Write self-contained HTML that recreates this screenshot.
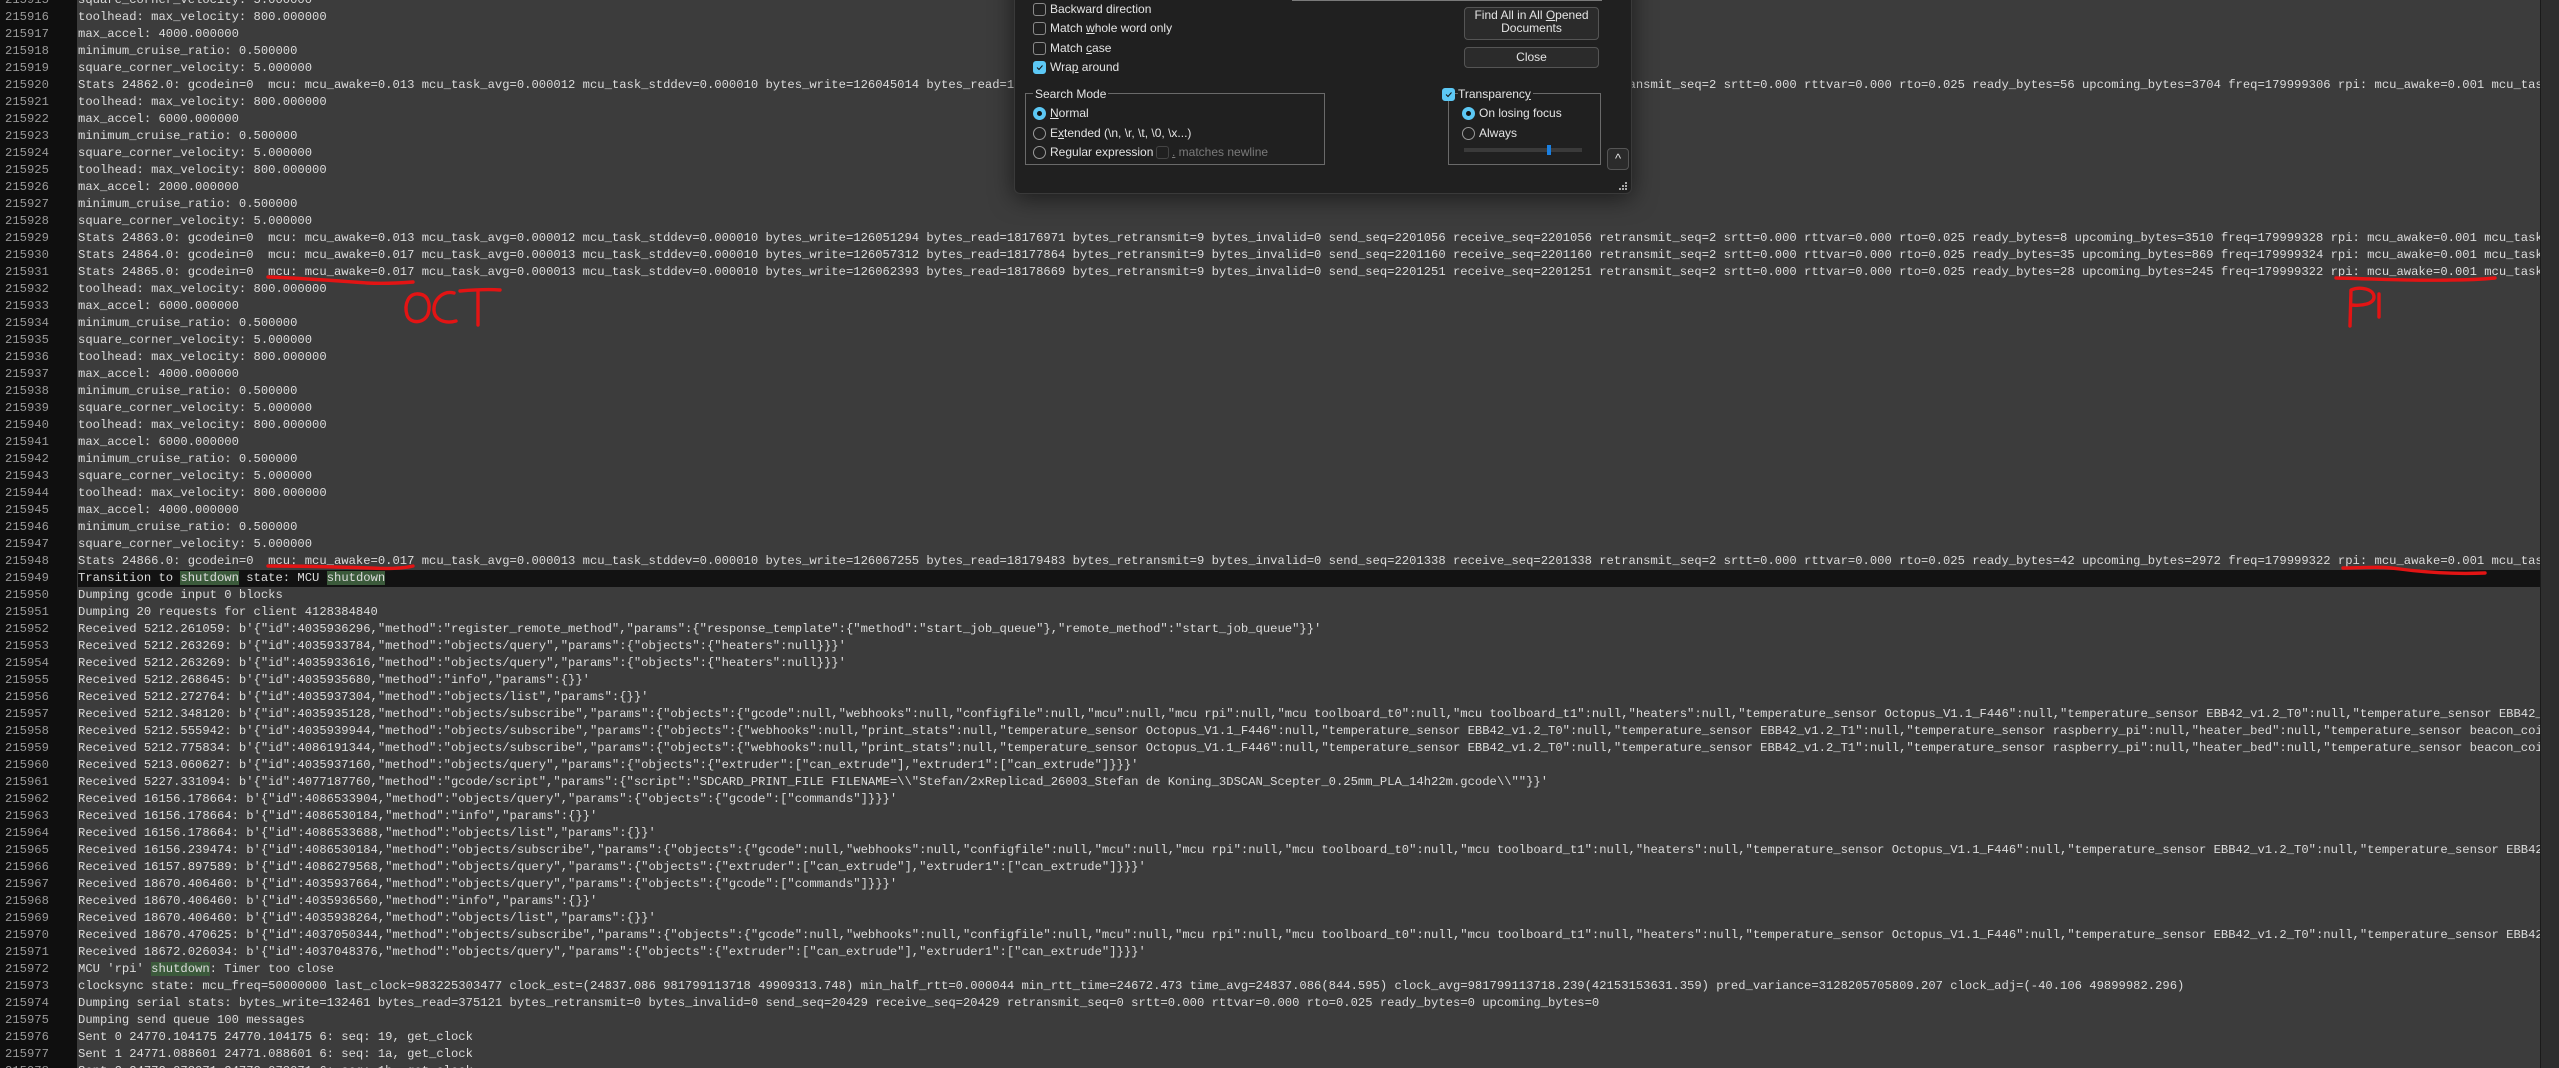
<!DOCTYPE html>
<html><head><meta charset="utf-8"><style>
html,body{margin:0;padding:0;width:2559px;height:1068px;overflow:hidden;background:#3c3c3c}
#gut{position:absolute;left:0;top:0;width:77px;height:1068px;background:#0f0f0f}
#ed{position:absolute;left:0;top:0;width:2540px;height:1068px;overflow:hidden}
.l{position:absolute;left:0;height:17px;line-height:17px;width:2540px;white-space:pre;font-family:"Liberation Mono",monospace;font-size:12.2px;color:#dcdcdc}
.l b{font-weight:normal;position:absolute;left:5px;color:#9a9a9a;width:70px}
.l i{font-style:normal;position:absolute;left:78px}
.cur{background:#121212}
.hl{background:#3b5a3b}
#sb{position:absolute;left:2540px;top:0;width:19px;height:1068px;background:#2e2e2e;border-left:1px solid #1a1a1a}
#dlg{position:absolute;left:1014px;top:-30px;width:616px;height:222px;background:#202020;border:1px solid #3a3a3a;border-radius:6px;box-shadow:0 4px 24px rgba(0,0,0,.55);font-family:"Liberation Sans",sans-serif;font-size:12px;color:#e4e4e4}
.d{position:absolute;white-space:nowrap;line-height:14px}
.cb{position:absolute;width:11px;height:11px;border:1px solid #8a8a8a;border-radius:3px}
.cbon{background:#5cc8f5;border-color:#5cc8f5}
.rd{position:absolute;width:11px;height:11px;border:1px solid #9a9a9a;border-radius:50%}
.rdon{background:#5cc8f5;border-color:#5cc8f5}
.rdon:after{content:"";position:absolute;left:3px;top:3px;width:5px;height:5px;border-radius:50%;background:#111}
.btn{position:absolute;border:1px solid #555;border-radius:4px;background:#2b2b2b;text-align:center}
.grp{position:absolute;border:1px solid #6a6a6a}
</style></head><body>
<div id="ed">
<div id="gut"></div>
<div class="l" style="top:-8px"><b>215915</b><i>square_corner_velocity: 5.000000</i></div>
<div class="l" style="top:9px"><b>215916</b><i>toolhead: max_velocity: 800.000000</i></div>
<div class="l" style="top:26px"><b>215917</b><i>max_accel: 4000.000000</i></div>
<div class="l" style="top:43px"><b>215918</b><i>minimum_cruise_ratio: 0.500000</i></div>
<div class="l" style="top:60px"><b>215919</b><i>square_corner_velocity: 5.000000</i></div>
<div class="l" style="top:77px"><b>215920</b><i>Stats 24862.0: gcodein=0  mcu: mcu_awake=0.013 mcu_task_avg=0.000012 mcu_task_stddev=0.000010 bytes_write=126045014 bytes_read=18175982 bytes_retransmit=9 bytes_invalid=0 send_seq=2200960 receive_seq=2200960 retransmit_seq=2 srtt=0.000 rttvar=0.000 rto=0.025 ready_bytes=56 upcoming_bytes=3704 freq=179999306 rpi: mcu_awake=0.001 mcu_task_avg=0.000</i></div>
<div class="l" style="top:94px"><b>215921</b><i>toolhead: max_velocity: 800.000000</i></div>
<div class="l" style="top:111px"><b>215922</b><i>max_accel: 6000.000000</i></div>
<div class="l" style="top:128px"><b>215923</b><i>minimum_cruise_ratio: 0.500000</i></div>
<div class="l" style="top:145px"><b>215924</b><i>square_corner_velocity: 5.000000</i></div>
<div class="l" style="top:162px"><b>215925</b><i>toolhead: max_velocity: 800.000000</i></div>
<div class="l" style="top:179px"><b>215926</b><i>max_accel: 2000.000000</i></div>
<div class="l" style="top:196px"><b>215927</b><i>minimum_cruise_ratio: 0.500000</i></div>
<div class="l" style="top:213px"><b>215928</b><i>square_corner_velocity: 5.000000</i></div>
<div class="l" style="top:230px"><b>215929</b><i>Stats 24863.0: gcodein=0  mcu: mcu_awake=0.013 mcu_task_avg=0.000012 mcu_task_stddev=0.000010 bytes_write=126051294 bytes_read=18176971 bytes_retransmit=9 bytes_invalid=0 send_seq=2201056 receive_seq=2201056 retransmit_seq=2 srtt=0.000 rttvar=0.000 rto=0.025 ready_bytes=8 upcoming_bytes=3510 freq=179999328 rpi: mcu_awake=0.001 mcu_task_avg=0.000</i></div>
<div class="l" style="top:247px"><b>215930</b><i>Stats 24864.0: gcodein=0  mcu: mcu_awake=0.017 mcu_task_avg=0.000013 mcu_task_stddev=0.000010 bytes_write=126057312 bytes_read=18177864 bytes_retransmit=9 bytes_invalid=0 send_seq=2201160 receive_seq=2201160 retransmit_seq=2 srtt=0.000 rttvar=0.000 rto=0.025 ready_bytes=35 upcoming_bytes=869 freq=179999324 rpi: mcu_awake=0.001 mcu_task_avg=0.000</i></div>
<div class="l" style="top:264px"><b>215931</b><i>Stats 24865.0: gcodein=0  mcu: mcu_awake=0.017 mcu_task_avg=0.000013 mcu_task_stddev=0.000010 bytes_write=126062393 bytes_read=18178669 bytes_retransmit=9 bytes_invalid=0 send_seq=2201251 receive_seq=2201251 retransmit_seq=2 srtt=0.000 rttvar=0.000 rto=0.025 ready_bytes=28 upcoming_bytes=245 freq=179999322 rpi: mcu_awake=0.001 mcu_task_avg=0.000</i></div>
<div class="l" style="top:281px"><b>215932</b><i>toolhead: max_velocity: 800.000000</i></div>
<div class="l" style="top:298px"><b>215933</b><i>max_accel: 6000.000000</i></div>
<div class="l" style="top:315px"><b>215934</b><i>minimum_cruise_ratio: 0.500000</i></div>
<div class="l" style="top:332px"><b>215935</b><i>square_corner_velocity: 5.000000</i></div>
<div class="l" style="top:349px"><b>215936</b><i>toolhead: max_velocity: 800.000000</i></div>
<div class="l" style="top:366px"><b>215937</b><i>max_accel: 4000.000000</i></div>
<div class="l" style="top:383px"><b>215938</b><i>minimum_cruise_ratio: 0.500000</i></div>
<div class="l" style="top:400px"><b>215939</b><i>square_corner_velocity: 5.000000</i></div>
<div class="l" style="top:417px"><b>215940</b><i>toolhead: max_velocity: 800.000000</i></div>
<div class="l" style="top:434px"><b>215941</b><i>max_accel: 6000.000000</i></div>
<div class="l" style="top:451px"><b>215942</b><i>minimum_cruise_ratio: 0.500000</i></div>
<div class="l" style="top:468px"><b>215943</b><i>square_corner_velocity: 5.000000</i></div>
<div class="l" style="top:485px"><b>215944</b><i>toolhead: max_velocity: 800.000000</i></div>
<div class="l" style="top:502px"><b>215945</b><i>max_accel: 4000.000000</i></div>
<div class="l" style="top:519px"><b>215946</b><i>minimum_cruise_ratio: 0.500000</i></div>
<div class="l" style="top:536px"><b>215947</b><i>square_corner_velocity: 5.000000</i></div>
<div class="l" style="top:553px"><b>215948</b><i>Stats 24866.0: gcodein=0  mcu: mcu_awake=0.017 mcu_task_avg=0.000013 mcu_task_stddev=0.000010 bytes_write=126067255 bytes_read=18179483 bytes_retransmit=9 bytes_invalid=0 send_seq=2201338 receive_seq=2201338 retransmit_seq=2 srtt=0.000 rttvar=0.000 rto=0.025 ready_bytes=42 upcoming_bytes=2972 freq=179999322 rpi: mcu_awake=0.001 mcu_task_avg=0.000</i></div>
<div class="l" style="top:570px;"><b>215949</b><i class="cur" style="width:2462px">Transition to <span class="hl">shutdown</span> state: MCU <span class="hl">shutdown</span></i></div>
<div class="l" style="top:587px"><b>215950</b><i>Dumping gcode input 0 blocks</i></div>
<div class="l" style="top:604px"><b>215951</b><i>Dumping 20 requests for client 4128384840</i></div>
<div class="l" style="top:621px"><b>215952</b><i>Received 5212.261059: b'{"id":4035936296,"method":"register_remote_method","params":{"response_template":{"method":"start_job_queue"},"remote_method":"start_job_queue"}}'</i></div>
<div class="l" style="top:638px"><b>215953</b><i>Received 5212.263269: b'{"id":4035933784,"method":"objects/query","params":{"objects":{"heaters":null}}}'</i></div>
<div class="l" style="top:655px"><b>215954</b><i>Received 5212.263269: b'{"id":4035933616,"method":"objects/query","params":{"objects":{"heaters":null}}}'</i></div>
<div class="l" style="top:672px"><b>215955</b><i>Received 5212.268645: b'{"id":4035935680,"method":"info","params":{}}'</i></div>
<div class="l" style="top:689px"><b>215956</b><i>Received 5212.272764: b'{"id":4035937304,"method":"objects/list","params":{}}'</i></div>
<div class="l" style="top:706px"><b>215957</b><i>Received 5212.348120: b'{"id":4035935128,"method":"objects/subscribe","params":{"objects":{"gcode":null,"webhooks":null,"configfile":null,"mcu":null,"mcu rpi":null,"mcu toolboard_t0":null,"mcu toolboard_t1":null,"heaters":null,"temperature_sensor Octopus_V1.1_F446":null,"temperature_sensor EBB42_v1.2_T0":null,"temperature_sensor EBB42_v1.2_T1":null</i></div>
<div class="l" style="top:723px"><b>215958</b><i>Received 5212.555942: b'{"id":4035939944,"method":"objects/subscribe","params":{"objects":{"webhooks":null,"print_stats":null,"temperature_sensor Octopus_V1.1_F446":null,"temperature_sensor EBB42_v1.2_T0":null,"temperature_sensor EBB42_v1.2_T1":null,"temperature_sensor raspberry_pi":null,"heater_bed":null,"temperature_sensor beacon_coil":null</i></div>
<div class="l" style="top:740px"><b>215959</b><i>Received 5212.775834: b'{"id":4086191344,"method":"objects/subscribe","params":{"objects":{"webhooks":null,"print_stats":null,"temperature_sensor Octopus_V1.1_F446":null,"temperature_sensor EBB42_v1.2_T0":null,"temperature_sensor EBB42_v1.2_T1":null,"temperature_sensor raspberry_pi":null,"heater_bed":null,"temperature_sensor beacon_coil":null</i></div>
<div class="l" style="top:757px"><b>215960</b><i>Received 5213.060627: b'{"id":4035937160,"method":"objects/query","params":{"objects":{"extruder":["can_extrude"],"extruder1":["can_extrude"]}}}'</i></div>
<div class="l" style="top:774px"><b>215961</b><i>Received 5227.331094: b'{"id":4077187760,"method":"gcode/script","params":{"script":"SDCARD_PRINT_FILE FILENAME=\\"Stefan/2xReplicad_26003_Stefan de Koning_3DSCAN_Scepter_0.25mm_PLA_14h22m.gcode\\""}}'</i></div>
<div class="l" style="top:791px"><b>215962</b><i>Received 16156.178664: b'{"id":4086533904,"method":"objects/query","params":{"objects":{"gcode":["commands"]}}}'</i></div>
<div class="l" style="top:808px"><b>215963</b><i>Received 16156.178664: b'{"id":4086530184,"method":"info","params":{}}'</i></div>
<div class="l" style="top:825px"><b>215964</b><i>Received 16156.178664: b'{"id":4086533688,"method":"objects/list","params":{}}'</i></div>
<div class="l" style="top:842px"><b>215965</b><i>Received 16156.239474: b'{"id":4086530184,"method":"objects/subscribe","params":{"objects":{"gcode":null,"webhooks":null,"configfile":null,"mcu":null,"mcu rpi":null,"mcu toolboard_t0":null,"mcu toolboard_t1":null,"heaters":null,"temperature_sensor Octopus_V1.1_F446":null,"temperature_sensor EBB42_v1.2_T0":null,"temperature_sensor EBB42_v1.2_T1":null</i></div>
<div class="l" style="top:859px"><b>215966</b><i>Received 16157.897589: b'{"id":4086279568,"method":"objects/query","params":{"objects":{"extruder":["can_extrude"],"extruder1":["can_extrude"]}}}'</i></div>
<div class="l" style="top:876px"><b>215967</b><i>Received 18670.406460: b'{"id":4035937664,"method":"objects/query","params":{"objects":{"gcode":["commands"]}}}'</i></div>
<div class="l" style="top:893px"><b>215968</b><i>Received 18670.406460: b'{"id":4035936560,"method":"info","params":{}}'</i></div>
<div class="l" style="top:910px"><b>215969</b><i>Received 18670.406460: b'{"id":4035938264,"method":"objects/list","params":{}}'</i></div>
<div class="l" style="top:927px"><b>215970</b><i>Received 18670.470625: b'{"id":4037050344,"method":"objects/subscribe","params":{"objects":{"gcode":null,"webhooks":null,"configfile":null,"mcu":null,"mcu rpi":null,"mcu toolboard_t0":null,"mcu toolboard_t1":null,"heaters":null,"temperature_sensor Octopus_V1.1_F446":null,"temperature_sensor EBB42_v1.2_T0":null,"temperature_sensor EBB42_v1.2_T1":null</i></div>
<div class="l" style="top:944px"><b>215971</b><i>Received 18672.026034: b'{"id":4037048376,"method":"objects/query","params":{"objects":{"extruder":["can_extrude"],"extruder1":["can_extrude"]}}}'</i></div>
<div class="l" style="top:961px"><b>215972</b><i>MCU 'rpi' <span class="hl">shutdown</span>: Timer too close</i></div>
<div class="l" style="top:978px"><b>215973</b><i>clocksync state: mcu_freq=50000000 last_clock=983225303477 clock_est=(24837.086 981799113718 49909313.748) min_half_rtt=0.000044 min_rtt_time=24672.473 time_avg=24837.086(844.595) clock_avg=981799113718.239(42153153631.359) pred_variance=3128205705809.207 clock_adj=(-40.106 49899982.296)</i></div>
<div class="l" style="top:995px"><b>215974</b><i>Dumping serial stats: bytes_write=132461 bytes_read=375121 bytes_retransmit=0 bytes_invalid=0 send_seq=20429 receive_seq=20429 retransmit_seq=0 srtt=0.000 rttvar=0.000 rto=0.025 ready_bytes=0 upcoming_bytes=0</i></div>
<div class="l" style="top:1012px"><b>215975</b><i>Dumping send queue 100 messages</i></div>
<div class="l" style="top:1029px"><b>215976</b><i>Sent 0 24770.104175 24770.104175 6: seq: 19, get_clock</i></div>
<div class="l" style="top:1046px"><b>215977</b><i>Sent 1 24771.088601 24771.088601 6: seq: 1a, get_clock</i></div>
<div class="l" style="top:1063px"><b>215978</b><i>Sent 2 24772.073071 24772.073071 6: seq: 1b, get_clock</i></div>
</div>
<div id="sb"></div>

<div id="dlg">
<div style="position:absolute;left:277px;top:29px;width:310px;height:1px;background:#7a7a7a"></div>
<div class="cb" style="left:18px;top:32px"></div><div class="d" style="left:35px;top:31px">Backward direction</div>
<div class="cb" style="left:18px;top:51px"></div><div class="d" style="left:35px;top:50px">Match <u>w</u>hole word only</div>
<div class="cb" style="left:18px;top:71px"></div><div class="d" style="left:35px;top:70px">Match <u>c</u>ase</div>
<div class="cb cbon" style="left:18px;top:90px"><svg width="11" height="11" style="position:absolute;left:0;top:0"><path d="M3 5.5l2 2 3.5-4" stroke="#111" stroke-width="1" fill="none"/></svg></div><div class="d" style="left:35px;top:89px">Wra<u>p</u> around</div>
<div class="btn" style="left:449px;top:36px;width:133px;height:30px;line-height:13px;padding-top:1px">Find All in All <u>O</u>pened<br>Documents</div>
<div class="btn" style="left:449px;top:76px;width:133px;height:19px;line-height:19px">Close</div>
<div class="grp" style="left:10px;top:122px;width:298px;height:70px"></div>
<div class="d" style="left:18px;top:116px;background:#202020;padding:0 2px">Search Mode</div>
<div class="rd rdon" style="left:18px;top:136px"></div><div class="d" style="left:35px;top:135px"><u>N</u>ormal</div>
<div class="rd" style="left:18px;top:156px"></div><div class="d" style="left:35px;top:155px">E<u>x</u>tended (\n, \r, \t, \0, \x...)</div>
<div class="rd" style="left:18px;top:175px"></div><div class="d" style="left:35px;top:174px">Re<u>g</u>ular expression</div>
<div class="cb" style="left:141px;top:175px;border-color:#444"></div><div class="d" style="left:157px;top:174px;color:#7a7a7a"><u>.</u> matches newline</div>
<div class="grp" style="left:433px;top:122px;width:151px;height:70px"></div>
<div class="cb cbon" style="left:427px;top:117px"><svg width="11" height="11" style="position:absolute;left:0;top:0"><path d="M3 5.5l2 2 3.5-4" stroke="#111" stroke-width="1" fill="none"/></svg></div><div class="d" style="left:443px;top:116px;background:#202020;padding-right:2px">Transparenc<u>y</u></div>
<div class="rd rdon" style="left:447px;top:136px"></div><div class="d" style="left:464px;top:135px">On losing focus</div>
<div class="rd" style="left:447px;top:156px"></div><div class="d" style="left:464px;top:155px">Always</div>
<div style="position:absolute;left:449px;top:177px;width:118px;height:4px;background:#3a3a3a"></div>
<div style="position:absolute;left:532px;top:174px;width:4px;height:10px;background:#1a7fe0"></div>
<div class="btn" style="left:592px;top:177px;width:20px;height:20px;line-height:20px;font-size:13px">^</div>
<svg style="position:absolute;left:604px;top:211px" width="9" height="9"><g fill="#aaa"><rect x="6" y="0" width="2" height="2"/><rect x="3" y="3" width="2" height="2"/><rect x="6" y="3" width="2" height="2"/><rect x="0" y="6" width="2" height="2"/><rect x="3" y="6" width="2" height="2"/><rect x="6" y="6" width="2" height="2"/></g></svg>
</div>

<svg style="position:absolute;left:0;top:0" width="2559" height="1068">
<g stroke="#e31414" stroke-width="3.4" fill="none" stroke-linecap="round" stroke-linejoin="round">
<path d="M268 277 C300 278 340 281 367 283 C385 284 400 283 413 282"/>
<path d="M420 294 C408 292 404 305 407 315 C410 324 424 324 428 314 C431 304 428 294 418 294"/>
<path d="M454 293 C443 290 433 300 434 311 C435 320 445 324 456 321"/>
<path d="M460 291 C472 290 487 289 500 290 M478 291 L478 325"/>
<path d="M268 566 C300 566 340 567 370 568 C390 569 405 568 413 566"/>
<path d="M2336 278 C2380 279 2420 281 2450 280 C2470 280 2485 279 2495 278"/>
<path d="M2350 326 L2351 290 C2360 286 2374 289 2374 297 C2374 304 2362 306 2352 305"/>
<path d="M2379 294 L2379 317"/>
<path d="M2343 568 C2360 568 2380 566 2400 569 C2430 573 2460 574 2485 573"/>
</g>
</svg>
</body></html>
